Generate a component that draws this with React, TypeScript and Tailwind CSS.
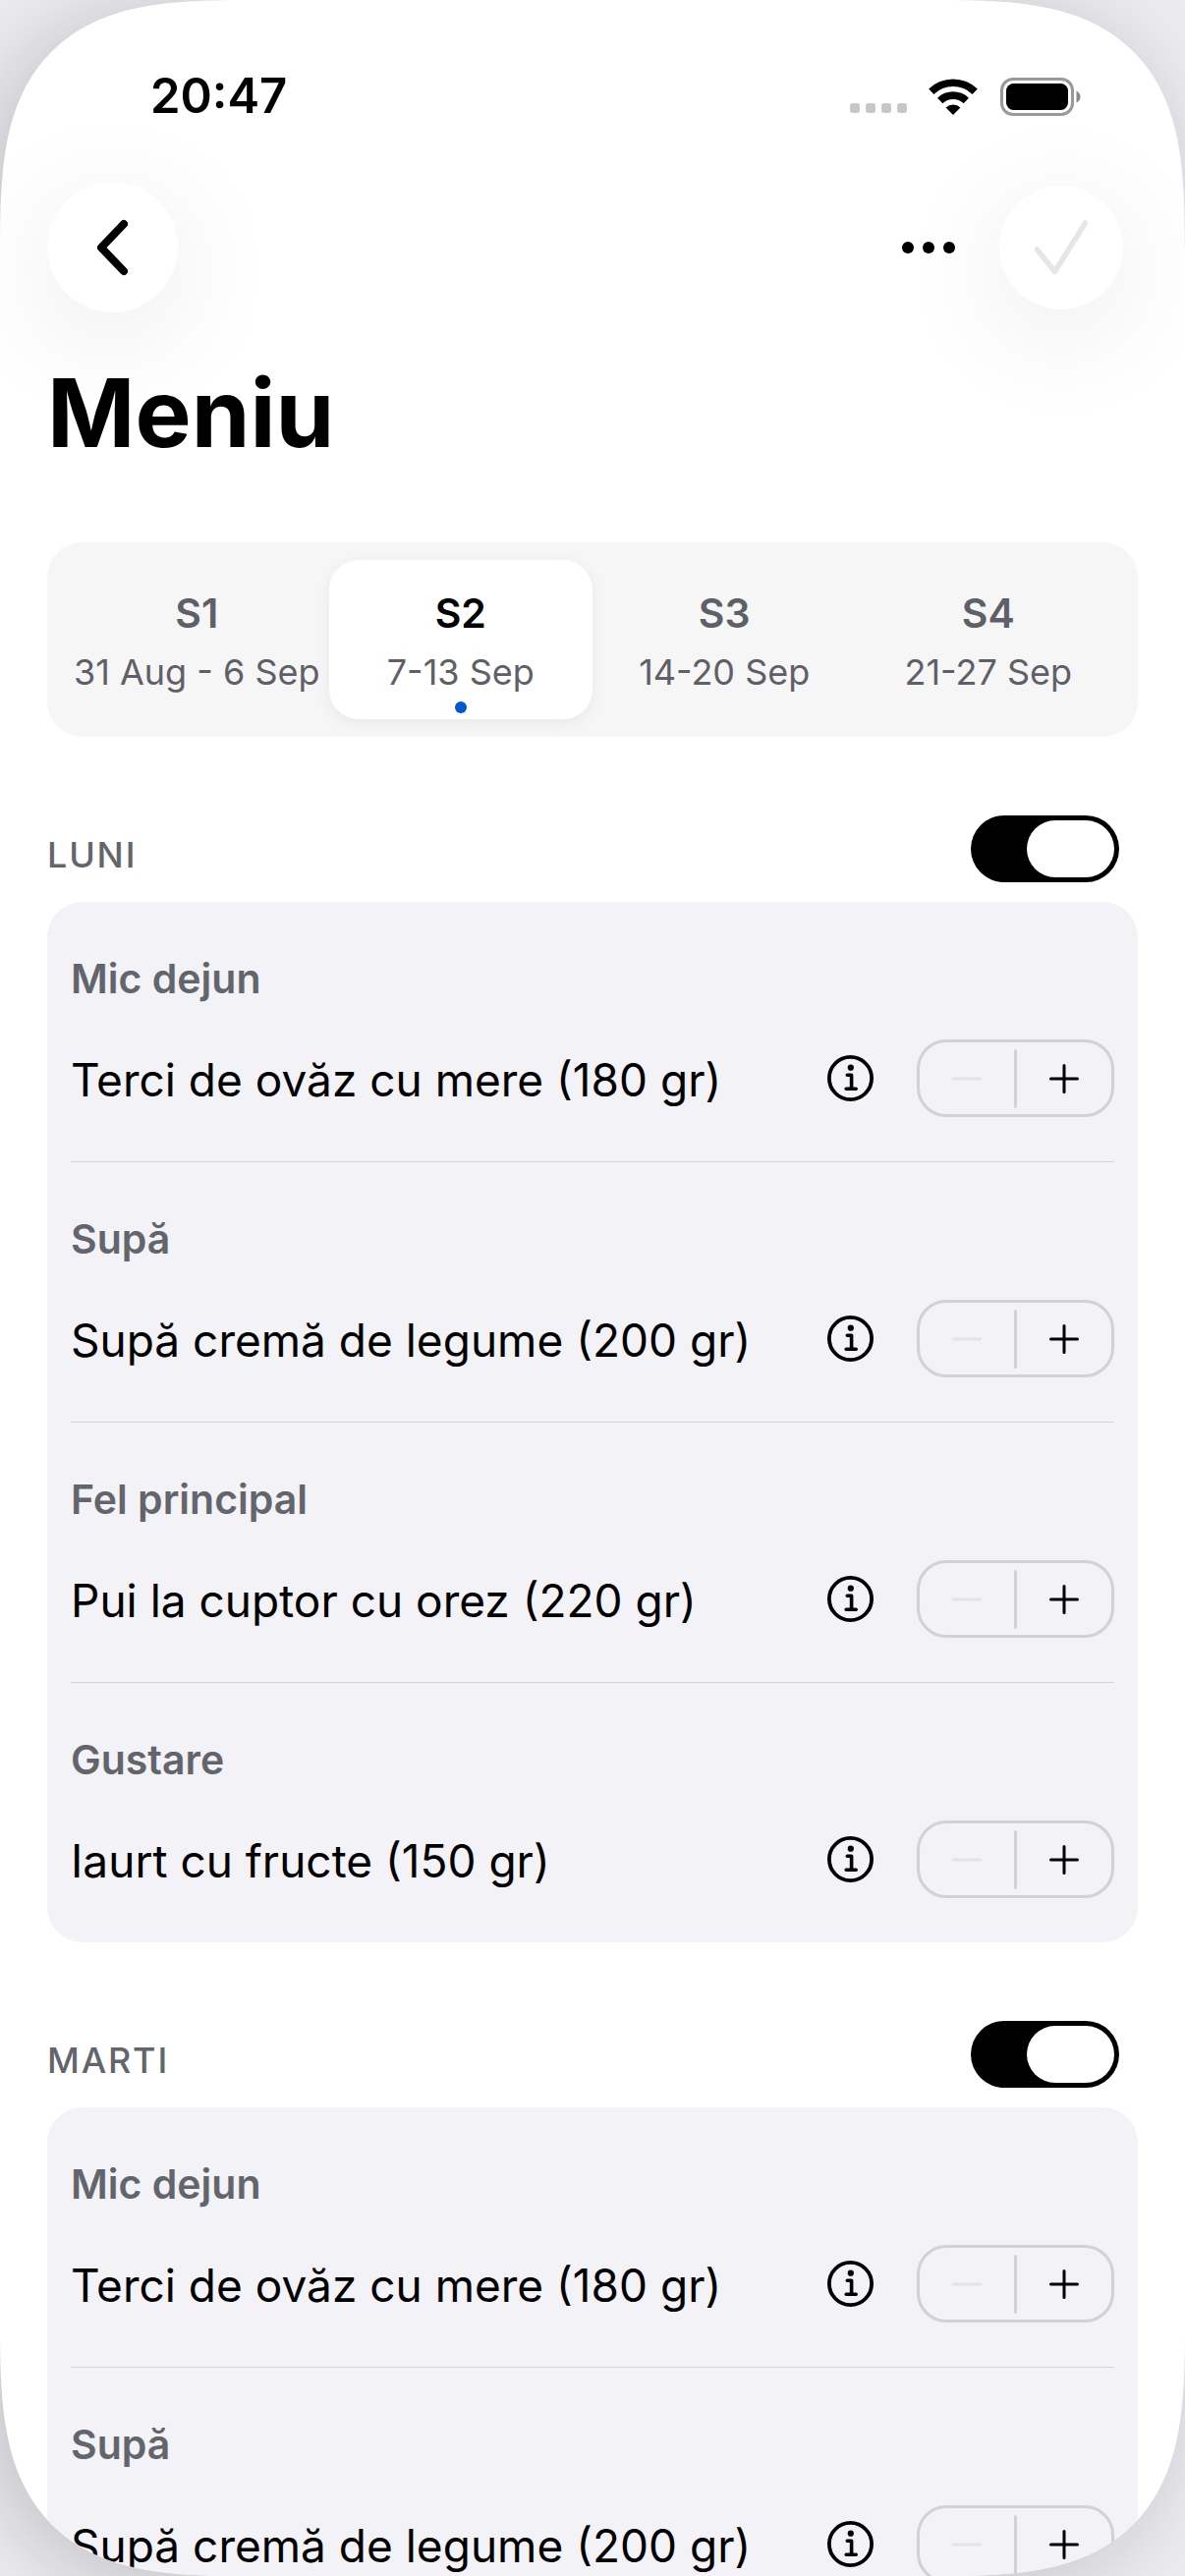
import { useState } from "react";

const weeks = [
  { id: "S1", range: "31 Aug - 6 Sep" },
  { id: "S2", range: "7-13 Sep", current: true },
  { id: "S3", range: "14-20 Sep" },
  { id: "S4", range: "21-27 Sep" },
];

type Meal = { course: string; dish: string };

const days: { name: string; meals: Meal[] }[] = [
  {
    name: "LUNI",
    meals: [
      { course: "Mic dejun", dish: "Terci de ovăz cu mere (180 gr)" },
      { course: "Supă", dish: "Supă cremă de legume (200 gr)" },
      { course: "Fel principal", dish: "Pui la cuptor cu orez (220 gr)" },
      { course: "Gustare", dish: "Iaurt cu fructe (150 gr)" },
    ],
  },
  {
    name: "MARTI",
    meals: [
      { course: "Mic dejun", dish: "Terci de ovăz cu mere (180 gr)" },
      { course: "Supă", dish: "Supă cremă de legume (200 gr)" },
    ],
  },
];

function StatusBar() {
  return (
    <div className="flex h-15 items-center justify-between pr-[58px] pl-[105px]">
      <span className="text-[49px] leading-15 font-semibold">20:47</span>
      <div className="flex items-center" aria-hidden="true">
        <div className="mt-6 mr-[22px] flex gap-1.5">
          <span className="size-2.5 rounded-[3px] bg-[#c7c7c7]" />
          <span className="size-2.5 rounded-[3px] bg-[#c7c7c7]" />
          <span className="size-2.5 rounded-[3px] bg-[#c7c7c7]" />
          <span className="size-2.5 rounded-[3px] bg-[#c7c7c7]" />
        </div>
        <svg width="50" height="37" viewBox="0 0 50 37" className="mr-[23px]">
          <g fill="none" stroke="#000" strokeWidth="7.6">
            <path d="M2.8 13.2 A32 32 0 0 1 47.2 13.2" />
            <path d="M11.7 22.4 A19.4 19.4 0 0 1 38.3 22.4" />
          </g>
          <path d="M25 37 L17.6 29.4 A10.6 10.6 0 0 1 32.4 29.4 Z" />
        </svg>
        <svg width="82" height="39" viewBox="0 0 82 39">
          <rect x="1.5" y="1.5" width="72" height="36" rx="11.5" fill="none" stroke="#999" strokeWidth="3" />
          <rect x="6" y="6" width="63" height="27" rx="7.5" />
          <path d="M77.5 13.5 Q81.5 15.5 81.5 19.5 Q81.5 23.5 77.5 25.5 Z" fill="#8a8a8a" />
        </svg>
      </div>
    </div>
  );
}

function NavBar() {
  return (
    <div className="flex items-center justify-between pr-[15px]">
      <button
        type="button"
        aria-label="Înapoi"
        className="flex size-[133px] items-center justify-center rounded-full bg-white shadow-[0_24px_120px_rgba(0,0,0,0.09)]"
      >
        <svg width="34" height="58" viewBox="0 0 34 58" fill="none" stroke="#000" strokeWidth="8" strokeLinecap="round" strokeLinejoin="round">
          <path d="M28 5 L5 29 L28 53" />
        </svg>
      </button>
      <div className="flex items-center gap-[45px]">
        <button type="button" aria-label="Mai multe" className="flex gap-[9px]">
          <span className="size-3 rounded-full bg-black" />
          <span className="size-3 rounded-full bg-black" />
          <span className="size-3 rounded-full bg-black" />
        </button>
        <button
          type="button"
          disabled
          aria-label="Salvează"
          className="flex size-[126px] items-center justify-center rounded-full bg-white shadow-[0_24px_120px_rgba(0,0,0,0.09)]"
        >
          <svg width="56" height="58" viewBox="0 0 56 58" fill="none" stroke="#e6e6e6" strokeWidth="5.5" strokeLinecap="round" strokeLinejoin="round">
            <path d="M3.5 31 L21.5 53.5 L52.5 4" />
          </svg>
        </button>
      </div>
    </div>
  );
}

function WeekPicker() {
  const [selected, setSelected] = useState("S2");

  return (
    <div className="mt-18 grid grid-cols-4 rounded-[36px] bg-[#f6f6f7] p-[18px]">
      {weeks.map((week) => (
        <button
          key={week.id}
          type="button"
          aria-pressed={selected === week.id}
          onClick={() => setSelected(week.id)}
          className={`flex flex-col items-center rounded-[30px] pt-[30px] pb-1.5 ${
            selected === week.id ? "bg-white text-black shadow-[0_4px_16px_rgba(0,0,0,0.06)]" : "text-[#5f6067]"
          }`}
        >
          <span className="text-[41px] leading-12 font-semibold">{week.id}</span>
          <span className="mt-3 text-[36px] leading-12 whitespace-nowrap text-[#5f6067]">{week.range}</span>
          <span className={`mt-1.5 size-3 rounded-full ${week.current ? "bg-[#0057d0]" : ""}`} />
        </button>
      ))}
    </div>
  );
}

function Stepper({ label }: { label: string }) {
  const [count, setCount] = useState(0);

  return (
    <div className="flex h-[79px] w-[201px] shrink-0 items-center rounded-[30px] border-3 border-[#d1d1d6]">
      <button
        type="button"
        aria-label={`Scade ${label}`}
        disabled={count === 0}
        onClick={() => setCount(count - 1)}
        className="flex h-full flex-1 items-center justify-center text-black disabled:text-[#e3e3e8]"
      >
        <svg width="32" height="32" viewBox="0 0 32 32" stroke="currentColor" strokeWidth="3" strokeLinecap="round">
          <path d="M2.5 16 H29.5" />
        </svg>
      </button>
      <span className="h-15 w-[3px] rounded-full bg-[#d1d1d6]" />
      <button
        type="button"
        aria-label={`Adaugă ${label}`}
        onClick={() => setCount(count + 1)}
        className="flex h-full flex-1 items-center justify-center"
      >
        <svg width="32" height="32" viewBox="0 0 32 32" stroke="#000" strokeWidth="3" strokeLinecap="round">
          <path d="M2.5 16 H29.5 M16 2.5 V29.5" />
        </svg>
      </button>
    </div>
  );
}

function MealRow({ course, dish }: Meal) {
  return (
    <li className="border-b border-[#d3d3d8] pt-[54px] pb-[45px] last:border-b-0">
      <h3 className="text-[41px] leading-12 font-semibold text-[#63656c]">{course}</h3>
      <div className="mt-[38px] flex items-center">
        <p className="flex-1 pt-0.5 text-[46px] leading-15 text-black">{dish}</p>
        <button type="button" aria-label={`Detalii ${dish}`} className="mr-11">
          <svg width="47" height="47" viewBox="0 0 47 47" fill="none" stroke="#000" strokeLinecap="round" strokeLinejoin="round">
            <circle cx="23.5" cy="23.5" r="21.6" strokeWidth="3.8" />
            <circle cx="23.8" cy="12.7" r="3.1" fill="#000" stroke="none" />
            <path d="M20.3 20.3 H24.6 V34.3 M19.2 34.3 H29.2" strokeWidth="3.6" />
          </svg>
        </button>
        <Stepper label={dish} />
      </div>
    </li>
  );
}

function DaySection({ name, meals }: { name: string; meals: Meal[] }) {
  const id = `day-${name.toLowerCase()}`;

  return (
    <section className="mt-20">
      <div className="flex items-end justify-between pr-[19px]">
        <label htmlFor={id} className="text-[36px] leading-14 font-medium tracking-wider text-[#63656c]">
          {name}
        </label>
        <input
          id={id}
          type="checkbox"
          role="switch"
          defaultChecked
          className="flex h-[68px] w-[151px] appearance-none items-center rounded-full bg-[#d1d1d6] px-[5px] before:h-[58px] before:w-[89px] before:rounded-full before:bg-white checked:justify-end checked:bg-black"
        />
      </div>
      <ul className="mt-5 rounded-[36px] bg-[#f2f2f7] px-6">
        {meals.map((meal) => (
          <MealRow key={meal.course} {...meal} />
        ))}
      </ul>
    </section>
  );
}

export default function App() {
  return (
    <div className="h-screen overflow-hidden bg-[#ebebf0] font-['Inter',sans-serif]">
      <div className="h-full overflow-hidden rounded-[180px] bg-white text-black shadow-[-16px_10px_90px_rgba(0,0,0,0.18)] supports-[corner-shape:squircle]:rounded-[255px] supports-[corner-shape:squircle]:[corner-shape:superellipse(1.585)]">
        <main className="h-full overflow-y-auto px-12 pt-[68px] [scrollbar-width:none]">
          <StatusBar />
          <div className="mt-[57px]">
            <NavBar />
          </div>
          <h1 className="mt-[42px] text-[96px] leading-[120px] font-bold">Meniu</h1>
          <WeekPicker />
          {days.map((day) => (
            <DaySection key={day.name} {...day} />
          ))}
        </main>
      </div>
    </div>
  );
}
